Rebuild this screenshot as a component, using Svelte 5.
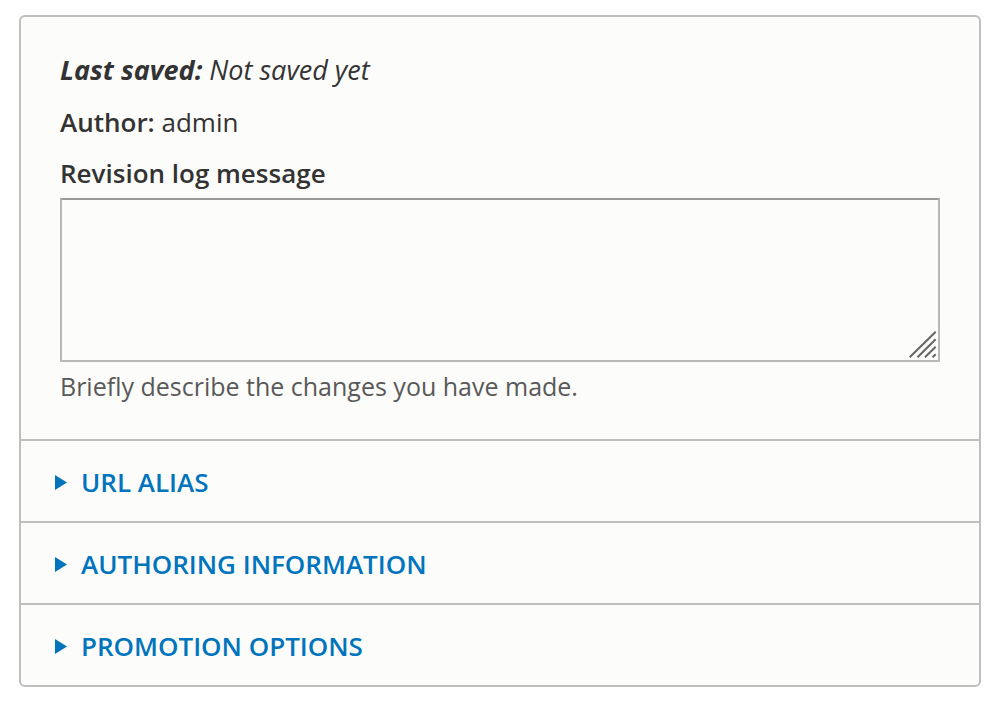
<script>
  const sections = ['URL alias', 'Authoring information', 'Promotion options'];
</script>

<main class="page">
  <form class="panel">
    <section class="meta">
      <p class="saved"><strong>Last saved:</strong> Not saved yet</p>
      <p><strong>Author:</strong> admin</p>
      <label for="revision-log">Revision log message</label>
      <div class="box">
        <textarea id="revision-log" aria-describedby="revision-help"></textarea>
        <svg class="grip" viewBox="0 0 28 28" aria-hidden="true">
          <path d="M.7 26.3 26.7.7M8.5 26.3 26.7 8.3M16 26.3 26.7 15.8M23.5 26.3 26.7 23.2" />
        </svg>
      </div>
      <p class="help" id="revision-help">Briefly describe the changes you have made.</p>
    </section>
    {#each sections as title}
      <details>
        <summary>
          <svg class="arrow" viewBox="0 0 12 15" aria-hidden="true"><path d="M0 0 12 7.5 0 15Z" /></svg>
          {title}
        </summary>
      </details>
    {/each}
  </form>
</main>

<style>
  :global(body) {
    background: #fff;
  }

  .page {
    padding: 15px 19px;
    font-family: "Open Sans", sans-serif;
    font-size: 26px;
    line-height: 36px;
    color: #333;
  }

  .panel {
    overflow: hidden;
    border: 2px solid #bfbfbf;
    border-radius: 6px;
    background: #fcfcfa;
  }

  .meta {
    padding: 35px 39px;
  }

  p {
    margin: 0 0 16px;
  }

  strong,
  label {
    font-weight: 600;
  }

  .saved {
    font-size: 27px;
    font-style: italic;
  }

  .saved strong {
    font-weight: 700;
  }

  label {
    display: block;
    margin-bottom: 8px;
    line-height: 34px;
  }

  .box {
    position: relative;
    display: flex;
  }

  textarea {
    flex: 1;
    box-sizing: border-box;
    height: 164px;
    margin: 0;
    padding: 8px;
    border: 2px solid #b8b8b8;
    border-top-color: #999;
    background: #fcfcfa;
    font: inherit;
    color: inherit;
    resize: none;
  }

  .grip {
    position: absolute;
    right: 3px;
    bottom: 3px;
    width: 28px;
    height: 28px;
    fill: none;
    stroke: #666;
    stroke-width: 2;
  }

  .help {
    margin: 6px 0 0;
    font-size: 25px;
    color: #595959;
  }

  details {
    border-top: 2px solid #bfbfbf;
  }

  summary {
    display: flex;
    align-items: center;
    gap: 14px;
    padding: 23px 34px 21px;
    list-style: none;
    font-weight: 600;
    text-transform: uppercase;
    color: #0074bd;
    cursor: pointer;
  }

  .arrow {
    width: 12px;
    height: 15px;
    fill: #0074bd;
  }
</style>
